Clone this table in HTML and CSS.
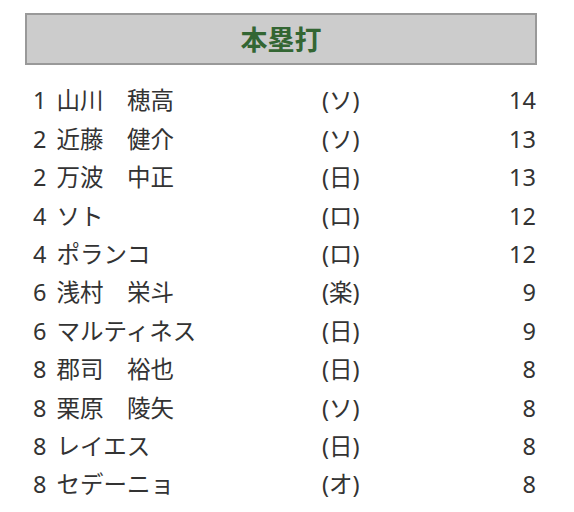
FILE: index.html
```html
<!DOCTYPE html>
<html lang="ja">
<head>
<meta charset="utf-8">
<link rel="stylesheet" href="styles.css">
</head>
<body>
<div class="panel">
  <h2 class="title">本塁打</h2>
  <div class="ranking">
    <div class="name"><span class="rank">1</span> 山川　穂高</div><div class="team">(ソ)</div><div class="count">14</div>
    <div class="name"><span class="rank">2</span> 近藤　健介</div><div class="team">(ソ)</div><div class="count">13</div>
    <div class="name"><span class="rank">2</span> 万波　中正</div><div class="team">(日)</div><div class="count">13</div>
    <div class="name"><span class="rank">4</span> ソト</div><div class="team">(ロ)</div><div class="count">12</div>
    <div class="name"><span class="rank">4</span> ポランコ</div><div class="team">(ロ)</div><div class="count">12</div>
    <div class="name"><span class="rank">6</span> 浅村　栄斗</div><div class="team">(楽)</div><div class="count">9</div>
    <div class="name"><span class="rank">6</span> マルティネス</div><div class="team">(日)</div><div class="count">9</div>
    <div class="name"><span class="rank">8</span> 郡司　裕也</div><div class="team">(日)</div><div class="count">8</div>
    <div class="name"><span class="rank">8</span> 栗原　陵矢</div><div class="team">(ソ)</div><div class="count">8</div>
    <div class="name"><span class="rank">8</span> レイエス</div><div class="team">(日)</div><div class="count">8</div>
    <div class="name"><span class="rank">8</span> セデーニョ</div><div class="team">(オ)</div><div class="count">8</div>
  </div>
</div>
</body>
</html>
```
FILE: styles.css
```css
html, body {
  margin: 0;
  padding: 0;
  background: #ffffff;
}
.panel {
  width: 512px;
  margin: 0 0 0 25px;
  padding-top: 13px;
  font-family: "Noto Sans", "Noto Sans CJK JP", sans-serif;
  color: #333333;
}
.title {
  margin: 0;
  height: 48px;
  box-sizing: content-box;
  border: 2px solid #999999;
  background: #cccccc;
  color: #336633;
  font-family: "Noto Sans CJK JP", sans-serif;
  font-weight: 700;
  font-size: 27px;
  line-height: 48px;
  text-align: center;
}
.ranking {
  display: grid;
  grid-template-columns: 289px 1fr auto;
  grid-auto-rows: 38.4px;
  align-items: center;
  padding: 17px 1px 0 8px;
  font-size: 23.5px;
  line-height: 1;
}
.name, .team, .count {
  white-space: nowrap;
}
.rank {
  margin-right: 4px;
}
.count {
  text-align: right;
}
```
